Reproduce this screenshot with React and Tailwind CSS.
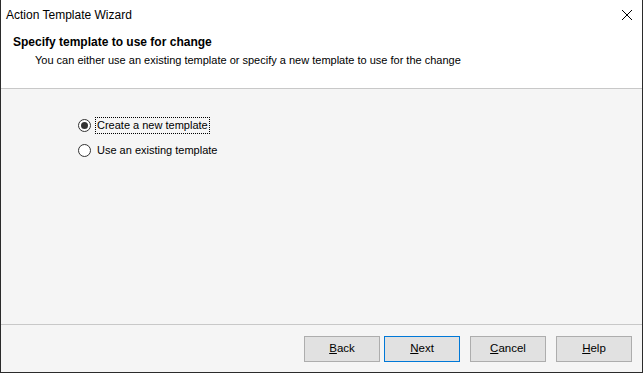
import { useState } from "react";

const font = { fontFamily: '"Liberation Sans", Arial, sans-serif' };

const Radio = ({ checked, focused, label, onClick }) => (
  <div className="flex items-center h-[25px] cursor-default" onClick={onClick}>
    <span className="w-[13px] h-[13px] rounded-full border border-[#333] bg-white flex items-center justify-center">
      {checked && <span className="w-[7px] h-[7px] rounded-full bg-[#333]" />}
    </span>
    <span
      className={
        "ml-[5px] px-[1px] leading-[15px] " +
        (focused ? "outline outline-1 outline-dotted outline-black" : "")
      }
    >
      {label}
    </span>
  </div>
);

const Button = ({ children, primary, className = "" }) => (
  <button
    className={
      "w-[76px] h-[26px] bg-[#e1e1e1] text-[11.5px] text-black border " +
      (primary ? "border-[#0078d7] " : "border-[#adadad] ") +
      className
    }
  >
    {children}
  </button>
);

export default function App() {
  const [choice, setChoice] = useState("new");

  return (
    <div
      className="w-[643px] h-[373px] flex flex-col bg-[#f5f5f5] border-x border-b border-[#2b2b2b] text-[11px] text-black"
      style={font}
    >
      {/* Title bar */}
      <div className="h-[30px] bg-white flex items-center justify-between pl-[5px] pr-[8px]">
        <span className="text-[12px]">Action Template Wizard</span>
        <svg width="12" height="12" viewBox="0 0 12 12" className="mr-[1px]">
          <path d="M1 1 L11 11 M11 1 L1 11" stroke="#000" strokeWidth="1" fill="none" />
        </svg>
      </div>

      {/* Header */}
      <div className="h-[59px] bg-white border-b border-[#c8c8c8] pl-[12px] pt-[4px]">
        <div className="font-bold leading-[16px] text-[12px]">Specify template to use for change</div>
        <div className="pl-[22px] leading-[20px]">
          You can either use an existing template or specify a new template to use for the change
        </div>
      </div>

      {/* Body */}
      <div className="flex-1 pl-[77px] pt-[24px]">
        <Radio
          checked={choice === "new"}
          focused={choice === "new"}
          label="Create a new template"
          onClick={() => setChoice("new")}
        />
        <Radio
          checked={choice === "existing"}
          focused={choice === "existing"}
          label="Use an existing template"
          onClick={() => setChoice("existing")}
        />
      </div>

      {/* Footer */}
      <div className="h-[48px] border-t border-[#c8c8c8] flex justify-end items-start pt-[11px] pr-[10px]">
        <Button>
          <span className="underline">B</span>ack
        </Button>
        <Button primary className="ml-[4px]">
          <span className="underline">N</span>ext
        </Button>
        <Button className="ml-[10px]">
          <span className="underline">C</span>ancel
        </Button>
        <Button className="ml-[10px]">
          <span className="underline">H</span>elp
        </Button>
      </div>
    </div>
  );
}
